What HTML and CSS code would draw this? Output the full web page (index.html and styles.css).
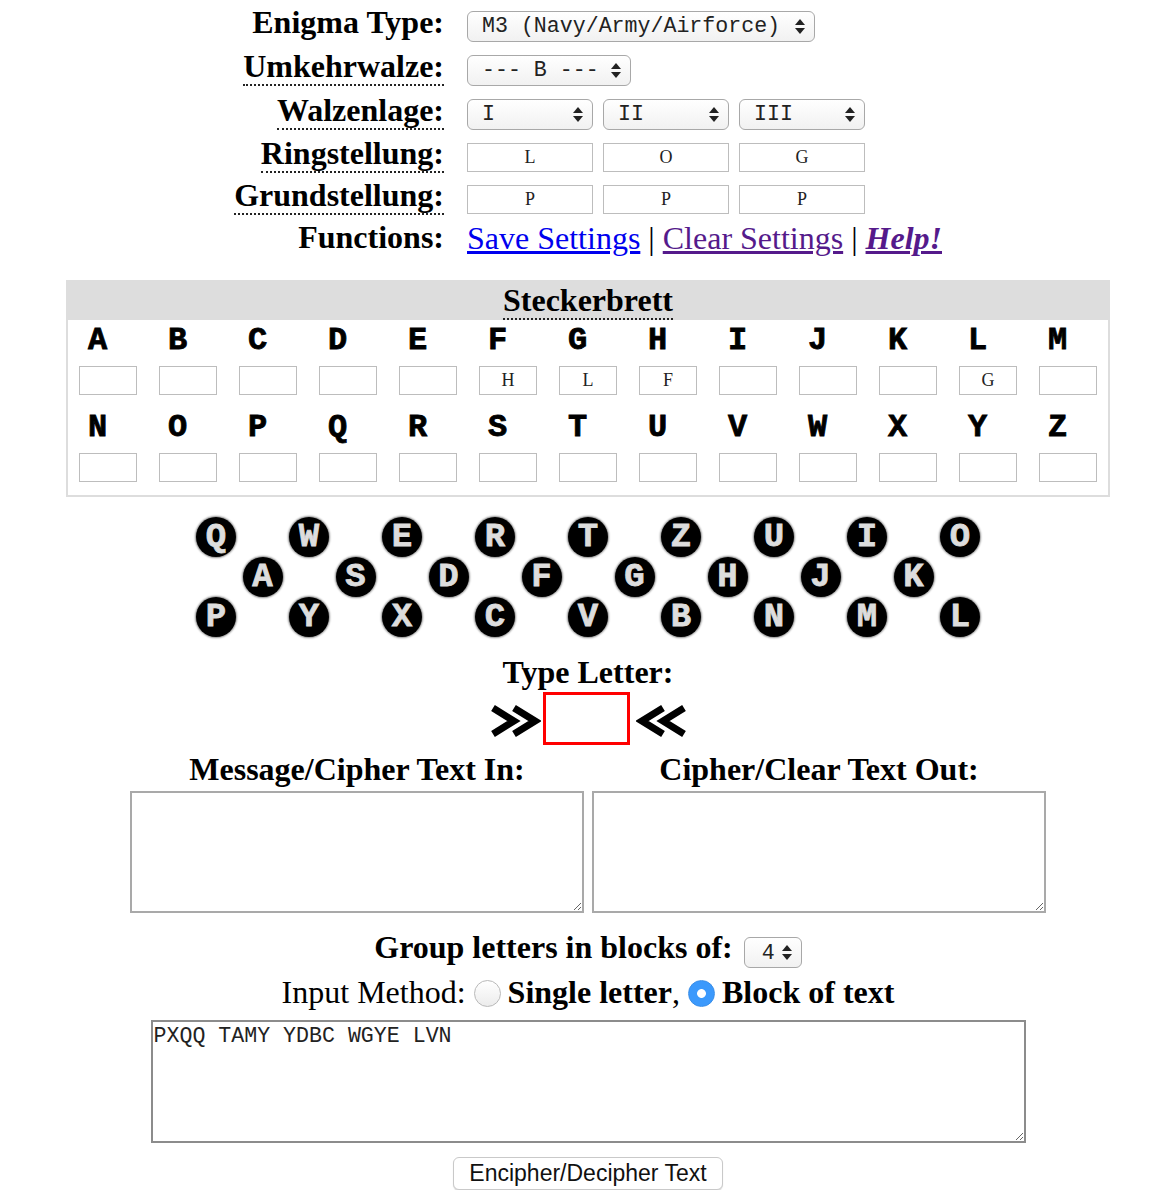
FILE: index.html
```html
<!DOCTYPE html>
<html lang="en">
<head>
<meta charset="utf-8">
<title>Enigma</title>
<link rel="stylesheet" href="styles.css">
</head>
<body>
<div class="settings">
  <div class="lbl">Enigma Type:</div>
  <div class="ctl">
    <span class="sel w348"><select><option>M3 (Navy/Army/Airforce)</option></select><svg width="10" height="15" viewBox="0 0 10 15"><polygon points="0,6 5,0 10,6"/><polygon points="0,9 10,9 5,15"/></svg></span>
  </div>

  <div class="lbl"><span class="abbr">Umkehrwalze:</span></div>
  <div class="ctl">
    <span class="sel w164"><select><option>--- B ---</option></select><svg width="10" height="15" viewBox="0 0 10 15"><polygon points="0,6 5,0 10,6"/><polygon points="0,9 10,9 5,15"/></svg></span>
  </div>

  <div class="lbl"><span class="abbr">Walzenlage:</span></div>
  <div class="ctl">
    <span class="sel w126"><select><option>I</option></select><svg width="10" height="15" viewBox="0 0 10 15"><polygon points="0,6 5,0 10,6"/><polygon points="0,9 10,9 5,15"/></svg></span>
    <span class="sel w126"><select><option>II</option></select><svg width="10" height="15" viewBox="0 0 10 15"><polygon points="0,6 5,0 10,6"/><polygon points="0,9 10,9 5,15"/></svg></span>
    <span class="sel w126"><select><option>III</option></select><svg width="10" height="15" viewBox="0 0 10 15"><polygon points="0,6 5,0 10,6"/><polygon points="0,9 10,9 5,15"/></svg></span>
  </div>

  <div class="lbl"><span class="abbr">Ringstellung:</span></div>
  <div class="ctl">
    <input class="rs" type="text" value="L">
    <input class="rs" type="text" value="O">
    <input class="rs" type="text" value="G">
  </div>

  <div class="lbl"><span class="abbr">Grundstellung:</span></div>
  <div class="ctl">
    <input class="rs" type="text" value="P">
    <input class="rs" type="text" value="P">
    <input class="rs" type="text" value="P">
  </div>

  <div class="lbl last">Functions:</div>
  <div class="ctl fn">
    <a class="lnk" href="#save">Save Settings</a> <b>|</b> <a class="lnk vis" href="#clear">Clear Settings</a> <b>|</b> <a class="lnk vis help" href="#help">Help!</a>
  </div>
</div>

<div class="stecker">
  <div class="sh"><span class="abbr">Steckerbrett</span></div>
  <div class="sgrid">
    <div class="sl">A</div><div class="sl">B</div><div class="sl">C</div><div class="sl">D</div><div class="sl">E</div><div class="sl">F</div><div class="sl">G</div><div class="sl">H</div><div class="sl">I</div><div class="sl">J</div><div class="sl">K</div><div class="sl">L</div><div class="sl">M</div>
    <div class="sc"><input class="si" type="text" value=""></div>
    <div class="sc"><input class="si" type="text" value=""></div>
    <div class="sc"><input class="si" type="text" value=""></div>
    <div class="sc"><input class="si" type="text" value=""></div>
    <div class="sc"><input class="si" type="text" value=""></div>
    <div class="sc"><input class="si" type="text" value="H"></div>
    <div class="sc"><input class="si" type="text" value="L"></div>
    <div class="sc"><input class="si" type="text" value="F"></div>
    <div class="sc"><input class="si" type="text" value=""></div>
    <div class="sc"><input class="si" type="text" value=""></div>
    <div class="sc"><input class="si" type="text" value=""></div>
    <div class="sc"><input class="si" type="text" value="G"></div>
    <div class="sc"><input class="si" type="text" value=""></div>
    <div class="sl">N</div><div class="sl">O</div><div class="sl">P</div><div class="sl">Q</div><div class="sl">R</div><div class="sl">S</div><div class="sl">T</div><div class="sl">U</div><div class="sl">V</div><div class="sl">W</div><div class="sl">X</div><div class="sl">Y</div><div class="sl">Z</div>
    <div class="sc"><input class="si" type="text" value=""></div>
    <div class="sc"><input class="si" type="text" value=""></div>
    <div class="sc"><input class="si" type="text" value=""></div>
    <div class="sc"><input class="si" type="text" value=""></div>
    <div class="sc"><input class="si" type="text" value=""></div>
    <div class="sc"><input class="si" type="text" value=""></div>
    <div class="sc"><input class="si" type="text" value=""></div>
    <div class="sc"><input class="si" type="text" value=""></div>
    <div class="sc"><input class="si" type="text" value=""></div>
    <div class="sc"><input class="si" type="text" value=""></div>
    <div class="sc"><input class="si" type="text" value=""></div>
    <div class="sc"><input class="si" type="text" value=""></div>
    <div class="sc"><input class="si" type="text" value=""></div>
  </div>
</div>

<div class="kb">
  <div class="krow">
    <span class="key">Q</span><span class="key">W</span><span class="key">E</span><span class="key">R</span><span class="key">T</span><span class="key">Z</span><span class="key">U</span><span class="key">I</span><span class="key">O</span>
  </div>
  <div class="krow">
    <span class="key">A</span><span class="key">S</span><span class="key">D</span><span class="key">F</span><span class="key">G</span><span class="key">H</span><span class="key">J</span><span class="key">K</span>
  </div>
  <div class="krow">
    <span class="key">P</span><span class="key">Y</span><span class="key">X</span><span class="key">C</span><span class="key">V</span><span class="key">B</span><span class="key">N</span><span class="key">M</span><span class="key">L</span>
  </div>
</div>

<div class="tlh">Type Letter:</div>
<div class="trow">
  <svg class="chev l" width="52" height="34" viewBox="0 0 52 34"><polyline points="4,4 25,17 4,30"/><polyline points="25,4 46,17 25,30"/></svg>
  <input class="tl" type="text" value="">
  <svg class="chev r" width="52" height="34" viewBox="0 0 52 34"><polyline points="27,4 6,17 27,30"/><polyline points="48,4 27,17 48,30"/></svg>
</div>

<div class="texts">
  <div class="tcol">
    <div class="th">Message/Cipher Text In:</div>
    <textarea class="ta"></textarea>
  </div>
  <div class="tcol">
    <div class="th">Cipher/Clear Text Out:</div>
    <textarea class="ta"></textarea>
  </div>
</div>

<div class="grp"><span class="gtx">Group letters in blocks of:</span><span class="sel w58 inl"><select><option>4</option></select><svg width="10" height="15" viewBox="0 0 10 15"><polygon points="0,6 5,0 10,6"/><polygon points="0,9 10,9 5,15"/></svg></span></div>

<div class="mth">Input Method:<input class="rad" type="radio" name="m"><b>Single letter</b>,<input class="rad on" type="radio" name="m" checked><b>Block of text</b></div>

<textarea class="big">PXQQ TAMY YDBC WGYE LVN</textarea>

<div class="btnrow"><button class="btn" type="button">Encipher/Decipher Text</button></div>
</body>
</html>
```

FILE: styles.css
```css
* { box-sizing: border-box; }

body {
  margin: 0;
  padding: 0 8px;
  font-family: "Liberation Serif", "Times New Roman", serif;
  color: #000;
  background: #fff;
}

/* settings table */
.settings {
  display: grid;
  grid-template-columns: 208px 473px;
  grid-template-rows: 44px 44px 44px 42px 42px 36px;
  column-gap: 23px;
  justify-content: center;
  align-items: center;
  padding-top: 4px;
}

.lbl {
  justify-self: end;
  margin-bottom: 7px;
  font-weight: bold;
  font-size: 32px;
  white-space: nowrap;
}
.lbl.last { margin-bottom: 2px; }

.abbr {
  border-bottom: 2px dotted #222;
}

.ctl {
  display: flex;
  align-items: center;
  gap: 10px;
  white-space: nowrap;
}

.sel {
  position: relative;
  display: block;
  height: 31px;
}
.sel.inl {
  flex: none;
  margin: 8px 0 0 11px;
}
.w348 { width: 348px; }
.w164 { width: 164px; }
.w126 { width: 126px; }
.w58 { width: 58px; }

.sel select {
  -webkit-appearance: none;
  appearance: none;
  display: block;
  width: 100%;
  height: 31px;
  margin: 0;
  border: 1px solid #a8a8a8;
  border-radius: 6px;
  background: linear-gradient(#ffffff, #f1f1f1);
  font-family: "Liberation Mono", "Courier New", monospace;
  font-size: 21.6px;
  font-weight: normal;
  color: #222;
  padding: 0 0 0 14px;
}
.w58 select { padding-left: 17px; }

.sel svg {
  position: absolute;
  right: 10px;
  top: 8px;
  fill: #222;
  pointer-events: none;
}

.rs {
  width: 126px;
  height: 29px;
  margin: 0;
  padding: 0;
  border: 1px solid #bdbdbd;
  text-align: center;
  font-family: "Liberation Serif", "Times New Roman", serif;
  font-size: 18px;
  color: #222;
  background: #fff;
}

.fn {
  gap: 0;
  font-size: 32px;
  font-weight: bold;
}
.lnk {
  font-weight: normal;
  color: #0000ee;
  text-decoration: underline;
}
.lnk.vis { color: #551a8b; }
.lnk.help { font-weight: bold; font-style: italic; }
.fn b { margin: 0 8px; font-weight: normal; }

/* steckerbrett */
.stecker {
  width: 1044px;
  margin: 24px auto 0;
  border: 2px solid #dddddd;
}
.sh {
  height: 38px;
  background: #dddddd;
  text-align: center;
  font-weight: bold;
  font-size: 32px;
  line-height: 37px;
}
.sgrid {
  display: grid;
  grid-template-columns: repeat(13, 80px);
  padding-bottom: 1px;
}
.sl {
  height: 42px;
  line-height: 42px;
  padding-left: 20px;
  font-family: "Liberation Mono", "Courier New", monospace;
  font-weight: bold;
  font-size: 32px;
  -webkit-text-stroke: 0.8px #000;
}
.sc {
  padding: 4px 0 12px;
}
.si {
  display: block;
  width: 58px;
  height: 29px;
  margin: 0 auto;
  padding: 0;
  border: 1px solid #bdbdbd;
  text-align: center;
  font-family: "Liberation Serif", "Times New Roman", serif;
  font-size: 18px;
  color: #222;
  background: #fff;
}

/* keyboard */
.kb { margin-top: 20px; }
.krow {
  display: flex;
  justify-content: center;
  gap: 53px;
  height: 40px;
}
.key {
  width: 40px;
  height: 40px;
  border-radius: 50%;
  background: #000;
  box-shadow: 0 0 2px 1px #8a8a8a;
  color: #dddddd;
  font-family: "Liberation Mono", "Courier New", monospace;
  font-weight: bold;
  font-size: 34px;
  line-height: 40px;
  text-align: center;
  -webkit-text-stroke: 0.8px #dddddd;
}

/* type letter */
.tlh {
  margin-top: 17px;
  text-align: center;
  font-weight: bold;
  font-size: 32px;
}
.trow {
  display: flex;
  justify-content: center;
  align-items: center;
  margin-top: 1px;
  height: 53px;
}
.chev { margin-top: 5px; }
.chev polyline {
  fill: none;
  stroke: #000;
  stroke-width: 7;
  stroke-linejoin: miter;
}
.chev.l { margin-right: 2px; }
.chev.r { margin-left: 6px; }
.tl {
  width: 87px;
  height: 53px;
  margin: 0;
  border: 3px solid #ff0000;
  outline: none;
  font-size: 30px;
  text-align: center;
}

/* text areas */
.texts {
  display: flex;
  justify-content: center;
  gap: 8px;
  margin-top: 6px;
}
.tcol {
  width: 454px;
  text-align: center;
}
.th {
  font-weight: bold;
  font-size: 32px;
  white-space: nowrap;
}
.ta {
  display: block;
  width: 454px;
  height: 122px;
  margin: 3px 0 0;
  border: 2px solid #a9a9a9;
  font-family: "Liberation Mono", "Courier New", monospace;
  font-size: 21.6px;
}

.grp {
  display: flex;
  justify-content: center;
  align-items: flex-start;
  margin-top: 16px;
  font-weight: bold;
  font-size: 32px;
}
.gtx { white-space: nowrap; }

.mth {
  margin-top: 6px;
  text-align: center;
  font-size: 32px;
}
.rad {
  -webkit-appearance: none;
  appearance: none;
  width: 27px;
  height: 27px;
  margin: 0 7px 0 8px;
  border: 1px solid #b9b9b9;
  border-radius: 50%;
  background: linear-gradient(#ffffff, #ececec);
  vertical-align: -4px;
}
.rad.on {
  border-color: #3a8ee8;
  background: radial-gradient(circle, #ffffff 0 4px, #3b99fc 4.8px);
}

.big {
  display: block;
  width: 875px;
  height: 123px;
  margin: 9px auto 0;
  padding: 2px 1px;
  border: 2px solid #8c8c8c;
  font-family: "Liberation Mono", "Courier New", monospace;
  font-size: 21.6px;
  color: #222;
}

.btnrow {
  margin-top: 14px;
  text-align: center;
}
.btn {
  height: 33px;
  padding: 0 15px;
  border: 1px solid #c9c9c9;
  border-radius: 6px;
  background: #fff;
  box-shadow: 0 1px 1px rgba(0, 0, 0, 0.15);
  font-family: "Liberation Sans", Arial, sans-serif;
  font-size: 23px;
  color: #111;
}
```
